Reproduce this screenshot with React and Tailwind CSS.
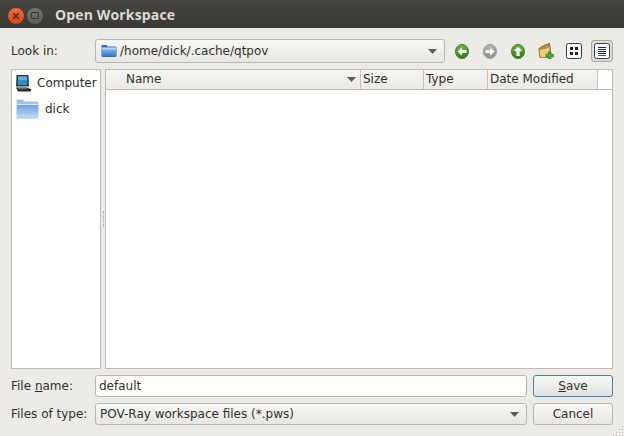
import React from 'react';

const FONT = 'font-["DejaVu_Sans",sans-serif]';

function Arrow({ className = '' }) {
  return (
    <svg width="9" height="5" viewBox="0 0 9 5" className={className}>
      <path d="M0 0h9L4.5 5z" fill="#5d5d5a" />
    </svg>
  );
}

function SmallFolder() {
  return (
    <svg width="16" height="14" viewBox="0 0 16 14" className="shrink-0">
      <defs>
        <linearGradient id="sf" x1="0" y1="0" x2="0" y2="1">
          <stop offset="0" stopColor="#dcebfb" />
          <stop offset="0.35" stopColor="#6ea6e6" />
          <stop offset="1" stopColor="#2f74c8" />
        </linearGradient>
      </defs>
      <path d="M.5 2a1 1 0 0 1 1-1h4l1 1.5h8a1 1 0 0 1 1 1v8.5a1 1 0 0 1-1 1h-13a1 1 0 0 1-1-1z" fill="#2a6bb8" />
      <path d="M1 3.5h14v9H1z" fill="url(#sf)" />
    </svg>
  );
}

function BigFolder() {
  return (
    <svg width="23" height="20" viewBox="0 0 23 20" className="shrink-0">
      <defs>
        <linearGradient id="bf" x1="0" y1="0" x2="0" y2="1">
          <stop offset="0" stopColor="#6fa3e4" />
          <stop offset="1" stopColor="#bdd8f6" />
        </linearGradient>
      </defs>
      <path d="M.5 2a1.5 1.5 0 0 1 1.5-1.5h5l1.5 2h12.5a1.5 1.5 0 0 1 1.5 1.5v14a1.5 1.5 0 0 1-1.5 1.5H2A1.5 1.5 0 0 1 .5 18z" fill="#9fc3ee" />
      <path d="M1 5h21v1H1z" fill="#dbe9fa" />
      <path d="M1 6h21v12.5H1z" fill="url(#bf)" />
    </svg>
  );
}

function NavIcon({ id, from, to, edge, dir }) {
  return (
    <svg width="14" height="15" viewBox="0 0 14 15">
      <defs>
        <linearGradient id={id} x1="0" y1="0" x2="0" y2="1">
          <stop offset="0" stopColor={from} />
          <stop offset="1" stopColor={to} />
        </linearGradient>
      </defs>
      <ellipse cx="7" cy="7.5" rx="6.5" ry="7" fill={`url(#${id})`} stroke={edge} strokeWidth="1" />
      {dir === 'left' && <path d="M2.5 7.5 6.8 3.3v2.7h4.7v3H6.8v2.7z" fill="#fff" />}
      {dir === 'right' && <path d="M11.5 7.5 7.2 3.3v2.7H2.5v3h4.7v2.7z" fill="#fff" />}
      {dir === 'up' && <path d="M7 2.8 11.3 7H8.6v5H5.4V7H2.7z" fill="#fff" />}
    </svg>
  );
}

function NewFolderIcon() {
  return (
    <svg width="16" height="16" viewBox="0 0 16 16">
      <path d="M1 5.5 6 2.5l5.5-2 1 9-.5 5H2z" fill="#b8944d" stroke="#7d6029" strokeWidth="1" />
      <path d="M2 14.5 1 6.5l5.5-1 5.5-2-.3 11z" fill="#efcb7c" stroke="#9a7a38" strokeWidth="0.8" />
      <path d="M10.3 9H13v2.3h2.6V14H13v2h-2.7v-2H8v-2.7h2.3z" fill="#46a73a" stroke="#2c6e25" strokeWidth="0.6" />
    </svg>
  );
}

function GridIcon() {
  return (
    <svg width="16" height="16" viewBox="0 0 16 16">
      <rect x="0.5" y="0.5" width="15" height="15" rx="2" fill="#f7fafd" stroke="#2f3d4c" />
      <path d="M4 4h3v3H4zM9 4h3v3H9zM4 9h3v3H4zM9 9h3v3H9z" fill="#1f1f1f" />
    </svg>
  );
}

function ListIcon() {
  return (
    <svg width="16" height="16" viewBox="0 0 16 16">
      <rect x="0.5" y="0.5" width="15" height="15" rx="2" fill="#f7fafd" stroke="#2f3d4c" />
      <path d="M4 4h8v1H4zM4 6h8v1H4zM4 8h8v1H4zM4 10h8v1H4zM4 12h8v.8H4z" fill="#222" />
    </svg>
  );
}

function ComputerIcon() {
  return (
    <svg width="17" height="18" viewBox="0 0 17 18" className="shrink-0">
      <path d="M1.5 1h12l.5 11.5H1z" fill="#34383d" />
      <path d="M3 2.5h9l.3 8.5H2.7z" fill="#2f8fc9" />
      <path d="M3 2.5h9l.1 3.5H3z" fill="#5cb0e0" />
      <path d="M1 13.5h11l4.5 2-1 2H3z" fill="#26282b" />
      <path d="M3 14.3h8l2 1H3z" fill="#7b8085" />
    </svg>
  );
}

function Combo({ children, className = '' }) {
  return (
    <div className={`flex items-center rounded-[3px] border border-[#b8b5ae] bg-gradient-to-b from-[#f8f7f5] to-[#e8e6e2] pr-[7px] ${className}`}>
      <div className="flex min-w-0 flex-1 items-center">{children}</div>
      <Arrow />
    </div>
  );
}

function Header({ label, className = '' }) {
  return (
    <div className={`flex h-full items-center border-r border-[#c4c1ba] pb-[2px] pl-[2px] ${className}`}>
      {label}
    </div>
  );
}

export default function App() {
  return (
    <div className={`${FONT} relative flex h-[436px] w-[624px] flex-col overflow-hidden bg-[#edebe7] text-[12px] leading-none text-[#2f2f2d]`}>
      {/* Title bar */}
      <div className="flex h-[28px] shrink-0 items-center bg-gradient-to-b from-[#45443f] to-[#3a3935] pl-[8px] pt-[3px]">
        <div className="flex h-[16px] w-[16px] items-center justify-center rounded-full bg-gradient-to-b from-[#f0693a] to-[#d9481c]">
          <svg width="8" height="8" viewBox="0 0 8 8">
            <path d="M1.2 1.2l5.6 5.6M6.8 1.2 1.2 6.8" stroke="#4a2113" strokeWidth="1.4" />
          </svg>
        </div>
        <div className="ml-[3px] flex h-[16px] w-[16px] items-center justify-center rounded-full bg-gradient-to-b from-[#76756f] to-[#5e5d58]">
          <div className="h-[7px] w-[8px] rounded-[1px] border border-[#35342f]" />
        </div>
        <span className="mb-[2px] ml-[12px] font-['Open_Sans',sans-serif] text-[14px] font-bold tracking-[0.15px] text-[#dfdbd2]">Open Workspace</span>
      </div>

      {/* Look in */}
      <div className="mt-[11px] flex h-[24px] shrink-0 items-center pl-[11px]">
        <span className="w-[84px]">Look in:</span>
        <Combo className="h-[24px] w-[350px] pl-[5px]">
          <SmallFolder />
          <span className="ml-[3px]">/home/dick/.cache/qtpov</span>
        </Combo>
        <div className="ml-[3px] flex items-center">
          <div className="flex w-[28px] justify-center"><NavIcon id="navback" from="#6cb544" to="#2f7a1c" edge="#3c7a26" dir="left" /></div>
          <div className="flex w-[28px] justify-center"><NavIcon id="navfwd" from="#b5b5b1" to="#8f8f8b" edge="#9a9a96" dir="right" /></div>
          <div className="flex w-[28px] justify-center"><NavIcon id="navup" from="#6cb544" to="#2f7a1c" edge="#3c7a26" dir="up" /></div>
          <div className="flex w-[28px] justify-center"><NewFolderIcon /></div>
          <div className="flex w-[28px] justify-center"><GridIcon /></div>
          <div className="ml-[3px] flex h-[22px] w-[22px] items-center justify-center rounded-[3px] border border-[#a9a69f] bg-[#dedbd6]"><ListIcon /></div>
        </div>
      </div>

      {/* Main panes */}
      <div className="mt-[6px] flex h-[300px] shrink-0 px-[11px]">
        <div className="flex w-[90px] shrink-0 flex-col border border-[#bdbab3] bg-white pl-[3px] pt-[4px]">
          <div className="flex h-[18px] items-center">
            <ComputerIcon />
            <span className="ml-[5px]">Computer</span>
          </div>
          <div className="mt-[5px] flex h-[24px] items-center pl-[1px]">
            <BigFolder />
            <span className="ml-[6px]">dick</span>
          </div>
        </div>
        <div className="flex w-[4px] shrink-0 items-center justify-center">
          <div className="h-[16px] w-[1px] border-l border-dotted border-[#a5a29b]" />
        </div>
        <div className="flex w-[508px] shrink-0 flex-col border border-[#bdbab3] bg-white">
          <div className="flex h-[20px] shrink-0 border-b border-[#bdbab3]">
            <div className="flex h-full w-[492px] bg-gradient-to-b from-[#f6f5f3] to-[#eceae6]">
              <div className="flex h-full w-[255px] items-center justify-between border-r border-[#c4c1ba] pb-[2px] pl-[20px] pr-[4px]">
                <span>Name</span>
                <Arrow className="mt-[2px]" />
              </div>
              <Header label="Size" className="w-[63px]" />
              <Header label="Type" className="w-[64px]" />
              <Header label="Date Modified" className="w-[110px]" />
            </div>
          </div>
        </div>
      </div>

      {/* File name */}
      <div className="mt-[6px] flex h-[22px] shrink-0 items-center pl-[11px]">
        <span className="w-[84px]">File <span className="underline">n</span>ame:</span>
        <div className="flex h-[22px] w-[432px] items-center rounded-[3px] border border-[#b8b5ae] bg-white pl-[3px]">default</div>
        <button className="ml-[6px] flex h-[22px] w-[80px] items-center justify-center rounded-[3px] border border-[#3f7fa8] bg-gradient-to-b from-[#f8f8f6] to-[#dfe3e4]">
          <span className="underline">S</span>ave
        </button>
      </div>

      {/* Files of type */}
      <div className="mt-[6px] flex h-[22px] shrink-0 items-center pl-[11px]">
        <span className="w-[84px]">Files of type:</span>
        <Combo className="h-[22px] w-[432px] pl-[4px]">POV-Ray workspace files (*.pws)</Combo>
        <button className="ml-[6px] flex h-[22px] w-[80px] items-center justify-center rounded-[3px] border border-[#b8b5ae] bg-gradient-to-b from-[#f8f7f5] to-[#e8e6e2]">Cancel</button>
      </div>

      {/* Size grip */}
      <svg width="11" height="11" viewBox="0 0 11 11" className="absolute bottom-0 right-0">
        <path d="M9 1h1v1H9zM6 4h1v1H6zM9 4h1v1H9zM3 7h1v1H3zM6 7h1v1H6zM9 7h1v1H9zM0 10h1v1H0zM3 10h1v1H3zM6 10h1v1H6zM9 10h1v1H9z" fill="#b5b2ab" />
      </svg>
    </div>
  );
}
